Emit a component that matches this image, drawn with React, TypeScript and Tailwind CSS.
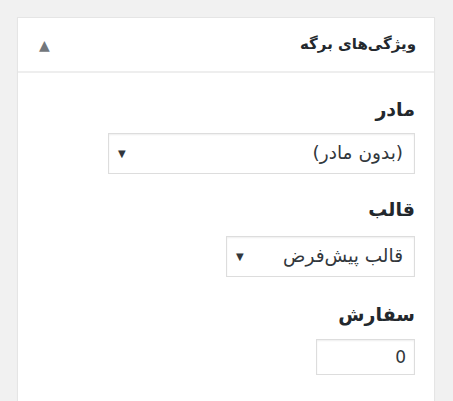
const font = { fontFamily: '"DejaVu Sans", Tahoma, sans-serif' };

const SelectBox = ({ value, width }: { value: string; width: string }) => (
  <div
    className={`${width} h-[41px] border border-[#dddddd] bg-white flex items-center justify-between pr-[11px] pl-[9px] shadow-[inset_0_1px_2px_rgba(0,0,0,0.07)]`}
  >
    <span className="text-[18.5px] text-[#32373c] leading-none">{value}</span>
    <span className="text-[10px] text-[#32373c] leading-none">▼</span>
  </div>
);

export default function App() {
  return (
    <div className="h-screen overflow-hidden bg-[#f1f1f1] pt-[17px] pl-[17px] pr-[18px]" style={font}>
      <div dir="rtl" className="h-[420px] bg-white border border-[#e5e5e5] shadow-[0_1px_1px_rgba(0,0,0,0.04)]">
        <div className="h-[55px] border-b-2 border-[#eeeeee] flex items-center justify-between pr-[18px] pl-[21px]">
          <h2 className="text-[15px] font-bold text-[#23282d] leading-none">ویژگی‌های برگه</h2>
          <span className="text-[#72777c] text-[14px] leading-none">▲</span>
        </div>

        <div className="px-[19px] pt-[23px] text-[#23282d]">
          <p className="text-[19px] font-bold leading-[26px] mb-[11px]">مادر</p>
          <SelectBox value="(بدون مادر)" width="w-[307px]" />

          <p className="text-[19px] font-bold leading-[26px] mt-[22px] mb-[14px]">قالب</p>
          <SelectBox value="قالب پیش‌فرض" width="w-[189px]" />

          <p className="text-[19px] font-bold leading-[26px] mt-[24px] mb-[12px]">سفارش</p>
          <div className="w-[99px] h-[36px] border border-[#dddddd] bg-white flex items-center pr-[8px] shadow-[inset_0_1px_2px_rgba(0,0,0,0.07)]">
            <span className="text-[17px] text-[#32373c] leading-none">0</span>
          </div>
        </div>
      </div>
    </div>
  );
}
